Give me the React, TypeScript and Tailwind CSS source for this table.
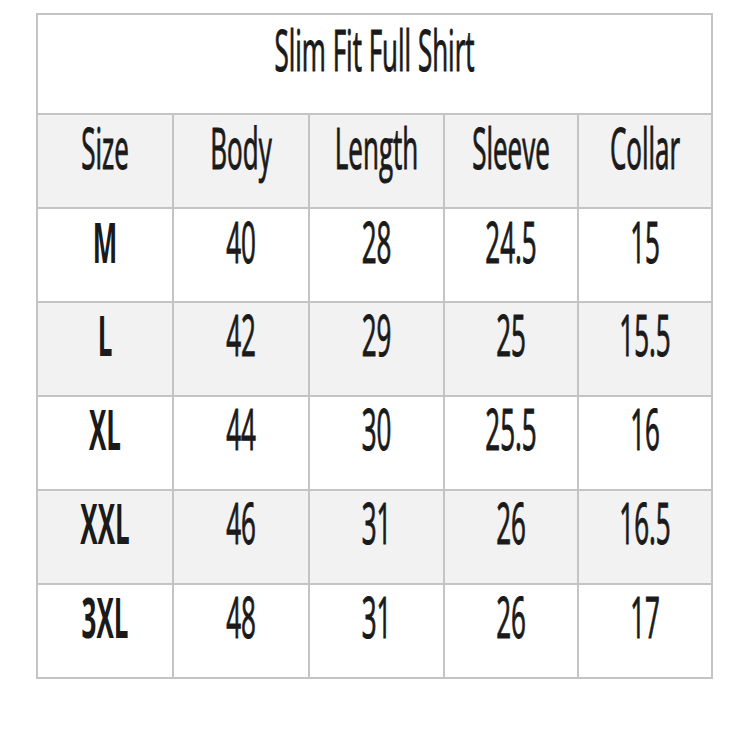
import React from "react";

const rows = [
  ["M", "40", "28", "24.5", "15"],
  ["L", "42", "29", "25", "15.5"],
  ["XL", "44", "30", "25.5", "16"],
  ["XXL", "46", "31", "26", "16.5"],
  ["3XL", "48", "31", "26", "17"],
];
const headers = ["Size", "Body", "Length", "Sleeve", "Collar"];
const widths = ["w-[136px]", "w-[136px]", "w-[135px]", "w-[134px]", "w-[134px]"];

function T({ children, bold }: { children: React.ReactNode; bold?: boolean }) {
  return (
    <span
      className={`inline-block scale-y-[2.15] text-[26px] leading-none text-[#1a1a1a] ${bold ? "font-bold" : "font-normal [-webkit-text-stroke:0.5px_#1a1a1a]"}`}
    >
      {children}
    </span>
  );
}

export default function App() {
  return (
    <div className="w-[750px] h-[750px] bg-white pt-[13px] pl-[36px]" style={{ fontFamily: '"Open Sans", sans-serif' }}>
      <table className="border-collapse">
        <tbody>
          <tr className="h-[100px] bg-white">
            <td colSpan={5} className="border-2 border-[#c4c4c4] text-center align-middle pb-[28px]">
              <T>Slim Fit Full Shirt</T>
            </td>
          </tr>
          <tr className="h-[94px] bg-[#f2f2f2]">
            {headers.map((h, i) => (
              <td key={h} className={`${widths[i]} border-2 border-[#c4c4c4] text-center align-middle pb-[26px]`}>
                <T>{h}</T>
              </td>
            ))}
          </tr>
          {rows.map((r, ri) => (
            <tr key={r[0]} className={`h-[94px] ${ri % 2 === 1 ? "bg-[#f2f2f2]" : "bg-white"}`}>
              {r.map((c, ci) => (
                <td key={ci} className="border-2 border-[#c4c4c4] text-center align-middle pb-[26px]">
                  <T bold={ci === 0}>{c}</T>
                </td>
              ))}
            </tr>
          ))}
        </tbody>
      </table>
    </div>
  );
}
